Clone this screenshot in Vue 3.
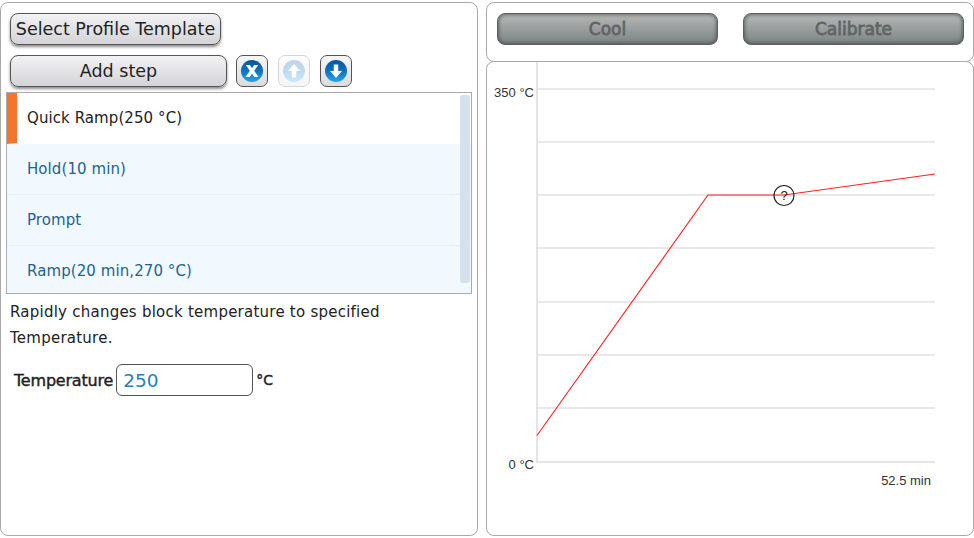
<template>
  <div class="page">
    <section class="panel left">
      <div class="row first-row">
        <button class="btn template-btn">Select Profile Template</button>
      </div>
      <div class="row step-row">
        <button class="btn add-btn">Add step</button>
        <button class="icon-btn">
          <svg width="24" height="24" viewBox="0 0 24 24">
            <circle cx="12" cy="12" r="11" fill="url(#ballFill)" />
            <path d="M5.8 6H9.9L12 9.2 14.1 6H18.2L14.2 11.8 18.5 18H14.3L12 14.6 9.7 18H5.5L9.8 11.8Z" fill="#fff" />
          </svg>
        </button>
        <button class="icon-btn disabled">
          <svg width="24" height="24" viewBox="0 0 24 24">
            <circle cx="12" cy="12" r="11" fill="url(#ballFill)" />
            <path d="M12 5 18 12H14.2V18.5H9.8V12H6Z" fill="#fff" />
          </svg>
        </button>
        <button class="icon-btn">
          <svg width="24" height="24" viewBox="0 0 24 24">
            <circle cx="12" cy="12" r="11" fill="url(#ballFill)" />
            <path d="M12 19 18 12H14.2V5.5H9.8V12H6Z" fill="#fff" />
          </svg>
        </button>
      </div>

      <div class="steps">
        <ul class="step-list">
          <li
            v-for="(step, i) in steps"
            :key="step"
            class="step"
            :class="{ selected: i === 0 }"
          >
            {{ step }}
          </li>
        </ul>
        <div class="scrollbar"></div>
      </div>

      <p class="desc">Rapidly changes block temperature to specified Temperature.</p>

      <div class="temp-row">
        <label class="temp-label" for="temp">Temperature</label>
        <input id="temp" class="temp-input" value="250" />
        <span class="temp-unit">°C</span>
      </div>
    </section>

    <div class="right">
      <section class="panel actions">
        <button class="btn dark">Cool</button>
        <button class="btn dark">Calibrate</button>
      </section>
      <section class="panel chart">
        <svg class="plot" width="488" height="475" viewBox="486 61 488 475">
          <defs>
            <linearGradient id="ballFill" x1="0" y1="0" x2="0" y2="1">
              <stop offset="0" stop-color="#07559c" />
              <stop offset="0.5" stop-color="#0f72c0" />
              <stop offset="1" stop-color="#25a6f0" />
            </linearGradient>
          </defs>
          <line x1="537" y1="62" x2="537" y2="463" class="axis" />
          <line
            v-for="y in gridY"
            :key="y"
            x1="538"
            x2="935"
            :y1="y"
            :y2="y"
            class="grid"
          />
          <line x1="537" y1="462" x2="935" y2="462" class="axis" />
          <polyline points="537,435.5 708,195 784,195 935,174" class="curve" />
          <circle cx="784" cy="195.5" r="10" class="marker" />
          <text x="784" y="200" class="marker-text" text-anchor="middle">?</text>
          <text x="534" y="96.5" class="label" text-anchor="end">350 °C</text>
          <text x="534" y="468.5" class="label" text-anchor="end">0 °C</text>
          <text x="931" y="484.5" class="label" text-anchor="end">52.5 min</text>
        </svg>
      </section>
    </div>
  </div>
</template>

<script setup>
const steps = ['Quick Ramp(250 °C)', 'Hold(10 min)', 'Prompt', 'Ramp(20 min,270 °C)']
const gridY = [89, 142, 195, 248, 302, 355, 408]
</script>

<style>
body {
  margin: 0;
  background: #fff;
}
</style>

<style scoped>
.page {
  display: flex;
  gap: 8px;
  width: 974px;
  height: 538px;
  padding: 2px 0;
  box-sizing: border-box;
  overflow: hidden;
  font-family: "DejaVu Sans", sans-serif;
  color: #222;
}
.panel {
  border: 1px solid #aaa;
  border-radius: 8px;
  box-sizing: border-box;
  background: #fff;
}
.left {
  width: 478px;
  flex: none;
  padding: 10px 5px 0 5px;
}
.row {
  display: flex;
  align-items: center;
  padding-left: 4px;
}
.step-row {
  margin-top: 10px;
  gap: 9px;
}
.btn {
  height: 32px;
  padding: 0;
  border: 1px solid #555;
  border-radius: 8px;
  font-family: inherit;
  font-size: 17.5px;
  color: #222;
  background: linear-gradient(#f2f2f4, #d4d4d8);
  box-shadow: 0 2px 3px rgba(0, 0, 0, 0.45);
}
.template-btn {
  width: 211px;
}
.add-btn {
  width: 217px;
}
.icon-btn {
  width: 32px;
  height: 32px;
  padding: 0;
  display: flex;
  align-items: center;
  justify-content: center;
  border: 1px solid #555;
  border-radius: 7px;
  background: linear-gradient(#f6f6f6, #dcdcdc);
}
.icon-btn + .icon-btn {
  margin-left: 1px;
}
.icon-btn.disabled {
  opacity: 0.25;
}
.steps {
  position: relative;
  margin-top: 5px;
  height: 202px;
  width: 466px;
  box-sizing: border-box;
  border: 1px solid #aaa;
  overflow: hidden;
}
.step-list {
  list-style: none;
  margin: 0;
  padding: 0;
}
.step {
  height: 51px;
  line-height: 50px;
  box-sizing: border-box;
  padding-left: 20px;
  font-size: 15px;
  letter-spacing: 0.08px;
  color: #23628f;
  background: #f1f9ff;
  border-bottom: 1px solid #e3f1fb;
}
.step.selected {
  color: #222;
  background: #fff;
  border-left: 10px solid #f4752e;
  padding-left: 10px;
  border-bottom-color: #fff;
}
.scrollbar {
  position: absolute;
  top: 2px;
  right: 1px;
  width: 10px;
  height: 188px;
  border-radius: 3px;
  background: #d5e2ec;
}
.desc {
  margin: 5px 0 0 4px;
  width: 440px;
  font-size: 15px;
  letter-spacing: 0.24px;
  line-height: 26px;
}
.temp-row {
  display: flex;
  align-items: center;
  margin: 13px 0 0 8px;
}
.temp-label {
  font-size: 16px;
  letter-spacing: -0.2px;
  -webkit-text-stroke: 0.4px #222;
}
.temp-input {
  width: 137px;
  height: 32px;
  margin-left: 3px;
  padding: 0 6px;
  box-sizing: border-box;
  border: 1px solid #555;
  border-radius: 6px;
  font-family: inherit;
  font-size: 18.5px;
  color: #2a7fb8;
  outline: none;
}
.temp-unit {
  margin-left: 3px;
  font-size: 14px;
  -webkit-text-stroke: 0.4px #222;
}
.right {
  flex: 1;
  display: flex;
  flex-direction: column;
  min-width: 0;
}
.actions {
  height: 60px;
  display: flex;
  justify-content: space-between;
  padding: 10px 9px 0 10px;
}
.btn.dark {
  width: 221px;
  font-size: 17px;
  color: #626565;
  -webkit-text-stroke: 0.8px #626565;
  border-color: #5c6060;
  background: linear-gradient(#b6b9b8, #7b8382);
  box-shadow: inset 0 0 4px #3f4242;
}
.chart {
  flex: 1;
  margin-top: -1px;
  overflow: hidden;
}
.plot {
  display: block;
  margin: -1px;
}
.axis {
  stroke: #e4e4e4;
  stroke-width: 2;
}
.grid {
  stroke: #e2e2e2;
  stroke-width: 1.5;
}
.curve {
  fill: none;
  stroke: #f22;
  stroke-width: 1.15;
}
.marker {
  fill: none;
  stroke: #222;
  stroke-width: 1.2;
}
.marker-text {
  font-family: "Liberation Sans", sans-serif;
  font-size: 13px;
  fill: #222;
}
.label {
  font-family: "Liberation Sans", sans-serif;
  font-size: 13px;
  fill: #333;
}
</style>
